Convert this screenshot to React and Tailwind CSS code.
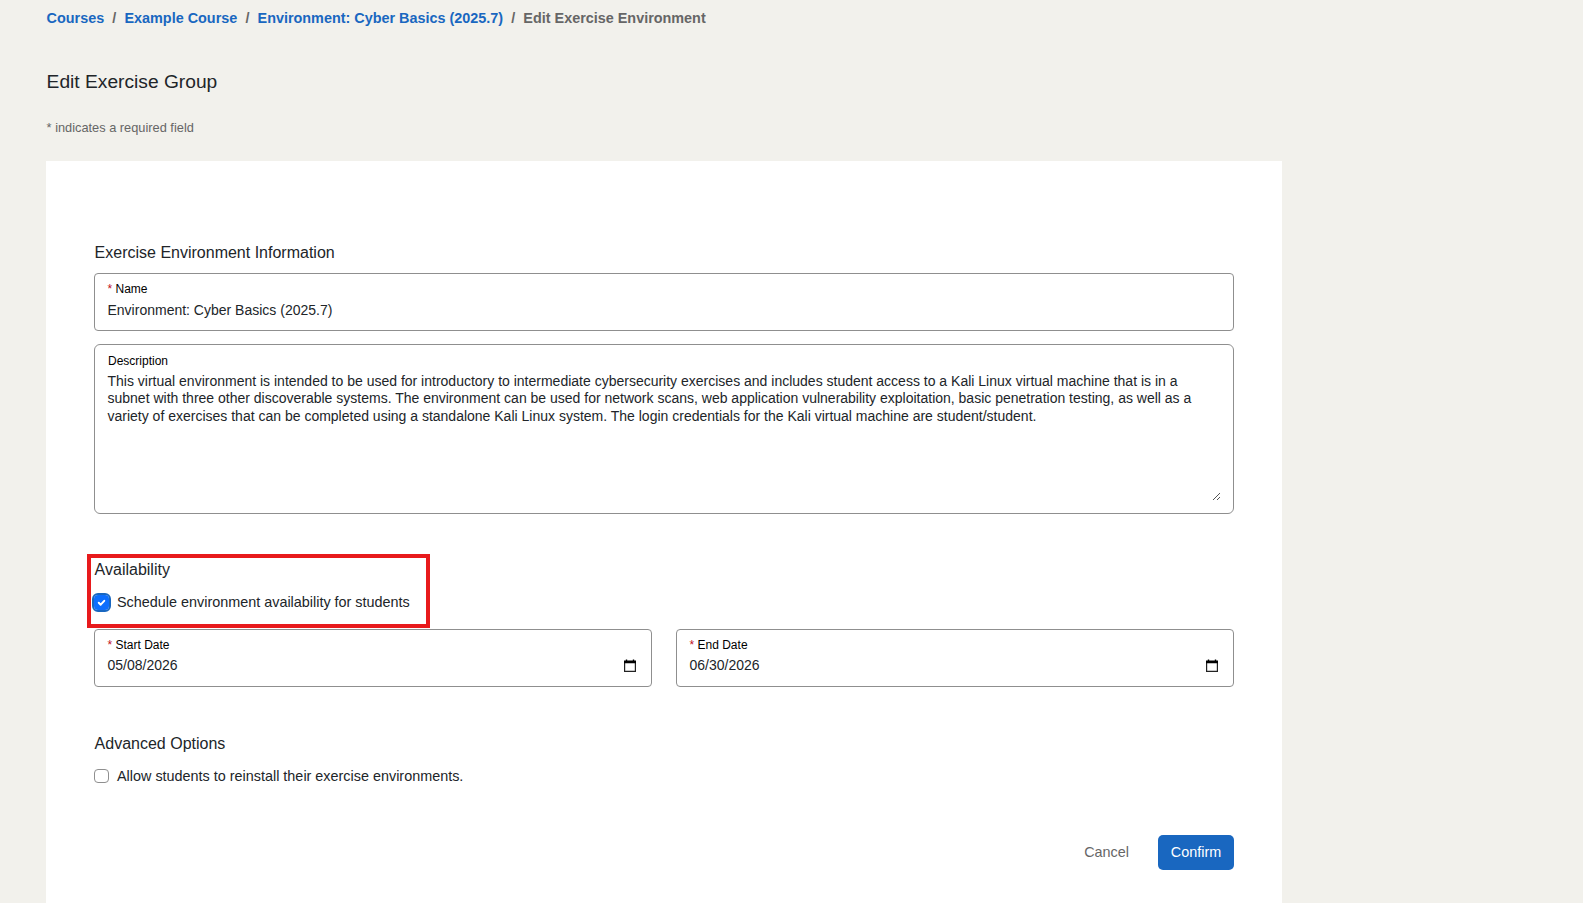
const crumbs = ["Courses", "Example Course", "Environment: Cyber Basics (2025.7)"];

const description =
  "This virtual environment is intended to be used for introductory to intermediate cybersecurity exercises and includes student access to a Kali Linux virtual machine that is in a subnet with three other discoverable systems. The environment can be used for network scans, web application vulnerability exploitation, basic penetration testing, as well as a variety of exercises that can be completed using a standalone Kali Linux system. The login credentials for the Kali virtual machine are student/student.";

function CalendarIcon() {
  return (
    <svg width="12" height="13" viewBox="0 0 12 13" className="shrink-0">
      <path d="M.6 2.5h10.8v9.9H.6z" fill="none" stroke="#222" strokeWidth="1.2" />
      <path d="M0 1.5h12V4.2H0zM1.8 .4h1.4v1.2H1.8zM8.8 .4h1.4v1.2H8.8z" fill="#000" />
    </svg>
  );
}

function Label({ required, children }) {
  return (
    <span className="block text-xs leading-[18px] text-black">
      {required && <span className="text-[#c00f1f]">* </span>}
      {children}
    </span>
  );
}

function DateField({ label, value }) {
  return (
    <div className="h-[58px] flex-1 rounded-[4px] border border-[#8f8f8f] pt-[6px] pr-[15px] pl-[12.5px]">
      <Label required>{label}</Label>
      <div className="flex h-[22px] items-center justify-between">
        <span>{value}</span>
        <CalendarIcon />
      </div>
    </div>
  );
}

function Checkbox({ checked }) {
  if (!checked) {
    return <span className="h-[14px] w-[15px] rounded-[4px] border border-[#8f8f8f] bg-white" />;
  }
  return (
    <span className="flex h-[15px] w-[15px] items-center justify-center rounded-[4px] bg-[#0d6efd] outline-2 outline-[#1967c0]">
      <svg width="11" height="11" viewBox="0 0 20 20">
        <path d="m5 10.5 3.5 3.5 6.5-7" fill="none" stroke="#fff" strokeWidth="3.6" strokeLinecap="round" strokeLinejoin="round" />
      </svg>
    </span>
  );
}

export default function App() {
  return (
    <div className="h-[903px] overflow-hidden bg-[#f2f1ec] pl-[46px] font-['Liberation_Sans',Arial,sans-serif] text-sm text-[#212529]">
      <nav className="flex h-[36px] items-center pl-[0.6px] text-[14.4px] font-bold">
        {crumbs.map((crumb) => (
          <span key={crumb} className="text-[#1967c0]">
            {crumb}
            <span className="px-[8.15px] text-[#666]">/</span>
          </span>
        ))}
        <span className="text-[#666]">Edit Exercise Environment</span>
      </nav>

      <h1 className="mt-[32px] pl-[0.6px] text-[19.2px] leading-[28px]">Edit Exercise Group</h1>
      <p className="mt-[22px] pl-[0.6px] text-[12.8px] leading-[20px] text-[#666]">* indicates a required field</p>

      <main className="mt-[23px] h-[742px] w-[1236px] bg-white px-[48px] pt-[80px]">
        <h2 className="pl-[0.6px] text-base leading-[24px]">Exercise Environment Information</h2>
        <div className="mt-[8px] h-[58px] rounded-[4px] border border-[#8f8f8f] pt-[6px] pl-[12.5px]">
          <Label required>Name</Label>
          <div className="leading-[24px]">Environment: Cyber Basics (2025.7)</div>
        </div>

        <div className="relative mt-[13px] h-[170px] rounded-[6px] border border-[#8f8f8f] pt-[7px] pr-[32px] pl-[12.5px]">
          <span className="block pl-[0.5px]">
            <Label>Description</Label>
          </span>
          <p className="mt-[2.75px] leading-[17.5px]">{description}</p>
          <svg width="9" height="9" viewBox="0 0 9 9" className="absolute right-[12px] bottom-[12px]">
            <path d="M1 8 8 1M5 8l3-3" stroke="#555" strokeWidth="1" />
          </svg>
        </div>

        <section className="relative mt-[44px]">
          <h2 className="pl-[0.6px] text-base leading-[24px]">Availability</h2>
          <label className="mt-[9px] flex h-[22px] items-center gap-2 text-[14.4px]">
            <Checkbox checked />
            Schedule environment availability for students
          </label>
          <div className="absolute -top-[4px] -left-[7px] h-[74px] w-[343px] border-4 border-[#e81a1c]" />
        </section>

        <div className="mt-[16px] flex gap-[24px]">
          <DateField label="Start Date" value="05/08/2026" />
          <DateField label="End Date" value="06/30/2026" />
        </div>

        <h2 className="mt-[45px] pl-[0.6px] text-base leading-[24px]">Advanced Options</h2>
        <label className="mt-[9px] flex h-[22px] items-center gap-2 text-[14.4px]">
          <Checkbox />
          Allow students to reinstall their exercise environments.
        </label>

        <div className="mt-[48px] flex items-center justify-end gap-[29px] text-[14.4px]">
          <button className="text-[#666]">Cancel</button>
          <button className="h-[35px] w-[76px] rounded-[5px] bg-[#1967c0] text-white">Confirm</button>
        </div>
      </main>
    </div>
  );
}
